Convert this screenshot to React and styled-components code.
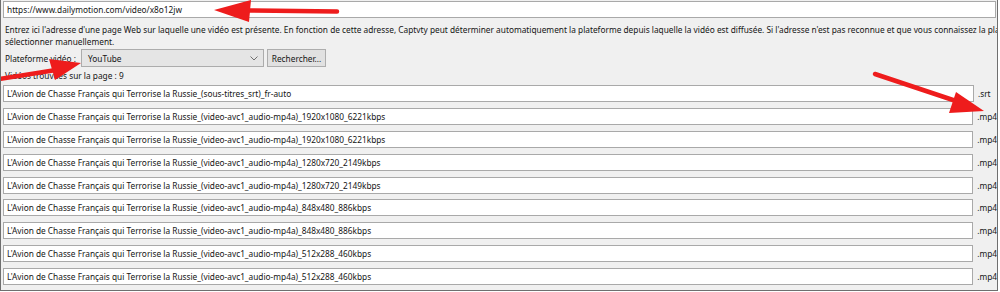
import styled, { createGlobalStyle } from 'styled-components';

const GlobalStyle = createGlobalStyle`
  html, body {
    margin: 0;
    padding: 0;
    background: #ffffff;
  }
  body {
    font-family: "Noto Sans", "Open Sans", sans-serif;
  }
`;

const files = [
  { name: "L'Avion de Chasse Français qui Terrorise la Russie_(sous-titres_srt)_fr-auto", ext: '.srt' },
  { name: "L'Avion de Chasse Français qui Terrorise la Russie_(video-avc1_audio-mp4a)_1920x1080_6221kbps", ext: '.mp4' },
  { name: "L'Avion de Chasse Français qui Terrorise la Russie_(video-avc1_audio-mp4a)_1920x1080_6221kbps", ext: '.mp4' },
  { name: "L'Avion de Chasse Français qui Terrorise la Russie_(video-avc1_audio-mp4a)_1280x720_2149kbps", ext: '.mp4' },
  { name: "L'Avion de Chasse Français qui Terrorise la Russie_(video-avc1_audio-mp4a)_1280x720_2149kbps", ext: '.mp4' },
  { name: "L'Avion de Chasse Français qui Terrorise la Russie_(video-avc1_audio-mp4a)_848x480_886kbps", ext: '.mp4' },
  { name: "L'Avion de Chasse Français qui Terrorise la Russie_(video-avc1_audio-mp4a)_848x480_886kbps", ext: '.mp4' },
  { name: "L'Avion de Chasse Français qui Terrorise la Russie_(video-avc1_audio-mp4a)_512x288_460kbps", ext: '.mp4' },
  { name: "L'Avion de Chasse Français qui Terrorise la Russie_(video-avc1_audio-mp4a)_512x288_460kbps", ext: '.mp4' },
];

const App = () => {
  return (
    <>
      <GlobalStyle />
      <Window>
        <UrlField>https://www.dailymotion.com/video/x8o12jw</UrlField>
        <Description>
          Entrez ici l'adresse d'une page Web sur laquelle une vidéo est présente. En fonction de cette adresse, Captvty peut déterminer automatiquement la plateforme depuis laquelle la vidéo est diffusée. Si l'adresse n'est pas reconnue et que vous connaissez la plateforme
          <br />
          sélectionner manuellement.
        </Description>
        <PlatformRow>
          <Label>Plateforme vidéo :</Label>
          <Combo>
            <span>YouTube</span>
            <svg width="8" height="5" viewBox="0 0 8 5">
              <path d="M0.5 0.5 L4 4 L7.5 0.5" fill="none" stroke="#707070" strokeWidth="1" />
            </svg>
          </Combo>
          <Button>Rechercher...</Button>
        </PlatformRow>
        <Count>Vidéos trouvées sur la page : 9</Count>
        <FileList>
          {files.map((f, i) => (
            <FileRow key={i}>
              <FileField>{f.name}</FileField>
              <Ext>{f.ext}</Ext>
            </FileRow>
          ))}
        </FileList>
        <Arrows width="997" height="290" viewBox="0 0 997 290">
          <g fill="#ee1c1c" stroke="#ee1c1c" strokeLinecap="round">
            <line x1="246" y1="10.5" x2="336" y2="11.5" strokeWidth="4.5" />
            <polygon points="213,10 250,0 248,22" stroke="none" />
            <line x1="-2" y1="79" x2="55" y2="70" strokeWidth="4.5" />
            <polygon points="80,63 48,59 54,80" stroke="none" />
            <line x1="874" y1="74" x2="955" y2="101" strokeWidth="4.5" />
            <polygon points="983,111 955,92 948,113" stroke="none" />
          </g>
        </Arrows>
      </Window>
    </>
  );
};

const Window = styled.div`
  position: relative;
  box-sizing: border-box;
  width: 998px;
  height: 291px;
  overflow: hidden;
  background: #f0f0f0;
  border: 1px solid #6f6f6f;
  border-top: none;
  padding: 1px 0 0 2px;
  font-size: 8.3px;
  color: #151515;
`;

const Field = styled.div`
  box-sizing: border-box;
  height: 17px;
  display: flex;
  align-items: center;
  padding-left: 3px;
  background: #ffffff;
  border: 1px solid #a9a9a9;
  white-space: nowrap;
  overflow: hidden;
`;

const UrlField = styled(Field)`
  width: 993px;
`;

const Description = styled.div`
  margin: 6px 0 0 2px;
  line-height: 11.5px;
  white-space: nowrap;
`;

const PlatformRow = styled.div`
  display: flex;
  align-items: center;
  height: 18px;
  margin-top: 2px;
  padding-left: 2px;
`;

const Label = styled.span`
  width: 76px;
  white-space: nowrap;
`;

const Combo = styled.div`
  box-sizing: border-box;
  width: 183px;
  height: 18px;
  display: flex;
  align-items: center;
  justify-content: space-between;
  padding: 0 5px 0 6px;
  background: #e5e5e5;
  border: 1px solid #acacac;
`;

const Button = styled.div`
  box-sizing: border-box;
  width: 59px;
  height: 18px;
  margin-left: 3px;
  display: flex;
  align-items: center;
  justify-content: center;
  background: #e1e1e1;
  border: 1px solid #adadad;
  white-space: nowrap;
`;

const Count = styled.div`
  margin: 3px 0 0 2px;
  line-height: 12px;
`;

const FileList = styled.div`
  display: flex;
  flex-direction: column;
  gap: 5.9px;
  margin-top: 3px;
`;

const FileRow = styled.div`
  display: flex;
  align-items: center;
`;

const FileField = styled(Field)`
  width: 971px;
`;

const Ext = styled.span`
  margin-left: 4px;
  white-space: nowrap;
`;

const Arrows = styled.svg`
  position: absolute;
  left: 0;
  top: 0;
  pointer-events: none;
`;

export default App;
